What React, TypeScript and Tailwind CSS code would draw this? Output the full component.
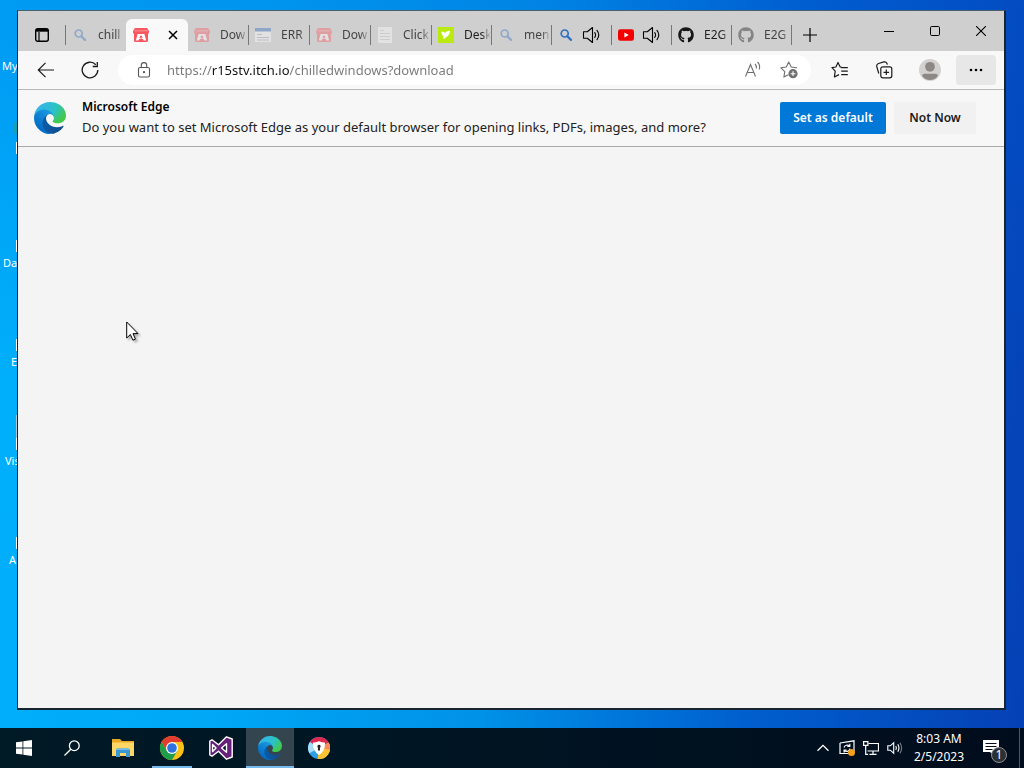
import React from "react";
import { FaGithub } from "react-icons/fa";

type TabKind = "search" | "itch" | "page" | "doc" | "leaf" | "youtube" | "github";

interface TabData {
  id: number;
  kind: TabKind;
  title?: string;
  audio?: boolean;
  active?: boolean;
  faded?: boolean;
  wide?: boolean;
}

const tabs: TabData[] = [
  { id: 1, kind: "search", title: "chill", faded: true },
  { id: 2, kind: "itch", active: true },
  { id: 3, kind: "itch", title: "Dow", faded: true, wide: true },
  { id: 4, kind: "page", title: "ERR", faded: true, wide: true },
  { id: 5, kind: "itch", title: "Dow", faded: true, wide: true },
  { id: 6, kind: "doc", title: "Click", faded: true, wide: true },
  { id: 7, kind: "leaf", title: "Desk" },
  { id: 8, kind: "search", title: "men", faded: true },
  { id: 9, kind: "search", audio: true },
  { id: 10, kind: "youtube", audio: true },
  { id: 11, kind: "github", title: "E2G" },
  { id: 12, kind: "github", title: "E2G", faded: true },
];

function EdgeLogo({ id, className }: { id: string; className: string }) {
  return (
    <svg viewBox="0 0 256 256" className={className} aria-hidden="true">
      <defs>
        <linearGradient id={id + "a"} x1="0.2" y1="0.5" x2="1" y2="0.5">
          <stop offset="0" stopColor="#0c59a4" />
          <stop offset="1" stopColor="#114a8b" />
        </linearGradient>
        <linearGradient id={id + "b"} x1="0.8" y1="0.1" x2="0.3" y2="0.95">
          <stop offset="0" stopColor="#1b9de2" />
          <stop offset="0.4" stopColor="#1186d6" />
          <stop offset="1" stopColor="#0067c0" />
        </linearGradient>
        <radialGradient id={id + "c"} cx="0.1" cy="0.2" r="1">
          <stop offset="0" stopColor="#35b4e8" />
          <stop offset="0.35" stopColor="#2fbbd9" />
          <stop offset="0.6" stopColor="#2bc3c2" />
          <stop offset="0.95" stopColor="#42c94f" />
        </radialGradient>
      </defs>
      <g transform="translate(-4.63 -4.92)">
        <path
          fill={"url(#" + id + "a)"}
          d="M235.68 195.46a93.73 93.73 0 0 1-10.54 4.71 101.87 101.87 0 0 1-35.9 6.46c-47.32 0-88.54-32.55-88.54-74.32A31.48 31.48 0 0 1 117.13 105c-42.8 1.8-53.8 46.4-53.8 72.53 0 73.88 68.09 81.37 82.76 81.37 7.91 0 19.84-2.3 27-4.56l1.31-.44a128.34 128.34 0 0 0 66.6-52.8 4 4 0 0 0-5.32-5.64Z"
        />
        <path
          fill={"url(#" + id + "b)"}
          d="M110.34 246.34A79.2 79.2 0 0 1 87.6 225a80.72 80.72 0 0 1 29.53-120c3.12-1.47 8.45-4.13 15.54-4a32.35 32.35 0 0 1 25.69 13 31.88 31.88 0 0 1 6.36 18.66c0-.21 24.46-79.6-80-79.6-43.9 0-80 41.66-80 78.21a130.15 130.15 0 0 0 12.11 56 128 128 0 0 0 156.38 67.11 75.55 75.55 0 0 1-62.78-8Z"
        />
        <path
          fill={"url(#" + id + "c)"}
          d="M156.94 153.78c-.81 1.05-3.3 2.5-3.3 5.66 0 2.61 1.7 5.12 4.72 7.23 14.38 10 41.49 8.68 41.56 8.68a59.56 59.56 0 0 0 30.27-8.35 61.38 61.38 0 0 0 30.43-52.88c.26-22.41-8-37.31-11.34-43.91C228.09 28.76 182.35 4.92 132.61 4.92a128 128 0 0 0-128 126.2c.48-36.54 36.8-66.05 80-66.05 3.5 0 23.46.34 42 10.07 16.34 8.58 24.9 18.94 30.85 29.21 6.18 10.67 7.28 24.15 7.28 29.52s-2.74 13.33-7.8 19.91Z"
        />
      </g>
    </svg>
  );
}

function SpeakerIcon({ className }: { className: string }) {
  return (
    <svg viewBox="0 0 18 18" className={className} fill="none" stroke="currentColor" strokeWidth="1.100" aria-hidden="true">
      <path d="M1.500 5.700h3.800L10.500 1.500v15l-5.200-4.200H1.500Z" strokeLinejoin="round" />
      <path d="M12.700 6.600a4 4 0 0 1 0 4.800M15 4.400a7.500 7.500 0 0 1 0 9.200" strokeLinecap="round" />
    </svg>
  );
}

function Favicon({ kind }: { kind: TabKind }) {
  switch (kind) {
    case "search":
      return (
        <svg viewBox="0 0 16 16" className="size-4" fill="none" stroke="#2f6fc2" aria-hidden="true">
          <circle cx="6.700" cy="6.500" r="3.500" strokeWidth="1.700" />
          <path d="m9.300 9.200 3.700 3.700" strokeWidth="2.200" strokeLinecap="round" />
        </svg>
      );
    case "itch":
      return (
        <svg viewBox="0 0 16 16" className="size-4" aria-hidden="true">
          <path fill="#f9565f" d="M2 1h12l2 3v1.600A2 2 0 0 1 15 7v6.500q0 1.500-1.500 1.500h-11Q1 15 1 13.500V7A2 2 0 0 1 0 5.600V4Z" />
          <path d="M1.300 3.800h13.400" stroke="#fba3a6" strokeWidth=".8" />
          <path fill="#fff" d="M4.600 7h6.800l1.800 6.500h-2.600l-.8-1.400H6.200l-.8 1.400H2.800Z" />
          <path fill="#f9565f" d="m8 8.200 2 2.200H8.700v1.400H7.300v-1.400H6Z" />
        </svg>
      );
    case "page":
      return (
        <svg viewBox="0 0 16 16" className="size-4" aria-hidden="true">
          <path fill="#fff" d="M0 1h16v14H0z" />
          <path fill="#2e6bc0" d="M0 1h16v3.500H0z" />
          <path stroke="#9da7b5" d="M2 7.500h5M2 10.500h12M2 13h12" />
        </svg>
      );
    case "doc":
      return (
        <svg viewBox="0 0 16 16" className="size-4" aria-hidden="true">
          <path fill="#fff" d="M1 0h14v16H1z" />
          <path stroke="#c8c8c8" d="M3 3.500h4M3 6.500h10M3 9.500h10M3 12.500h10" />
        </svg>
      );
    case "leaf":
      return (
        <svg viewBox="0 0 16 16" className="size-4" aria-hidden="true">
          <path fill="#b9ea12" d="M0 0h16v16H0z" />
          <path fill="#fff" d="M3.500 4.800q2.300-.6 3.500 1.200Q9 3.500 12 3.800q-.3 4.400-3.200 5.900Q7 10.700 5.600 12.200 5.800 9.500 4.300 8 3.300 6.800 3.500 4.800Z" />
        </svg>
      );
    case "youtube":
      return (
        <svg viewBox="0 0 16 16" className="size-4" aria-hidden="true">
          <rect y="2.300" width="16" height="11.400" rx="2.300" fill="#f40000" />
          <path fill="#fff" d="m6.400 5.500 4.300 2.500-4.300 2.500Z" />
        </svg>
      );
    case "github":
      return <FaGithub className="size-4 text-[#161616]" aria-hidden="true" />;
  }
}

function Tab({ tab }: { tab: TabData }) {
  if (tab.active) {
    return (
      <div className="mt-2 flex w-[62px] shrink-0 items-center justify-between self-stretch rounded-t-md bg-[#f9f9f9] pr-2.5 pl-[7px]">
        <Favicon kind={tab.kind} />
        <button aria-label="Close tab" className="text-black">
          <svg viewBox="0 0 10 10" className="size-2.5" stroke="currentColor" strokeWidth="1.500" aria-hidden="true">
            <path d="m1 1 8 8M9 1 1 9" />
          </svg>
        </button>
      </div>
    );
  }
  const beforeActive = tab.id === 1;
  return (
    <button
      aria-label={tab.title ? undefined : "Playing audio"}
      className={"mt-2 flex h-8 shrink-0 items-center pl-1.5 " + (tab.wide ? "w-[61px] " : "w-[60px] ")}
    >
      <span className={tab.faded ? "shrink-0 opacity-40" : "shrink-0"}>
        <Favicon kind={tab.kind} />
      </span>
      {tab.audio ? (
        <SpeakerIcon className="ml-2 size-[18px] shrink-0" />
      ) : (
        <span
          className={
            "ml-2.5 min-w-0 flex-1 overflow-hidden text-left text-xs leading-5 whitespace-nowrap [mask-image:linear-gradient(90deg,#000_65%,transparent)] " +
            (tab.faded ? "text-[#444]" : "text-[#222]")
          }
        >
          {tab.title}
        </span>
      )}
      <span className={beforeActive ? "ml-auto h-5 w-px shrink-0" : "ml-auto h-5 w-px shrink-0 bg-[#777]"} />
    </button>
  );
}

function TitleBar() {
  return (
    <div className="flex h-10 shrink-0 items-stretch bg-[#cfcfcf] text-black">
      <button aria-label="Tab actions" className="mt-2 flex w-[47px] shrink-0 items-center justify-center">
        <svg viewBox="0 0 16 16" className="size-4" fill="none" stroke="currentColor" aria-hidden="true">
          <rect x="1.700" y="1.700" width="12.600" height="12.600" rx="2" strokeWidth="1.400" />
          <path d="M2 3.300h12" strokeWidth="2.800" />
          <path d="M5 5v9" strokeWidth="1.200" />
        </svg>
      </button>
      <span className="mt-[14px] h-5 w-px shrink-0 bg-[#777]" />
      <div className="flex min-w-0">
        {tabs.map((t) => (
          <Tab key={t.id} tab={t} />
        ))}
      </div>
      <button aria-label="New tab" className="mt-2 flex w-9 shrink-0 items-center justify-center">
        <svg viewBox="0 0 14 14" className="size-3.5" stroke="currentColor" strokeWidth="1.200" aria-hidden="true">
          <path d="M7 0v14M0 7h14" />
        </svg>
      </button>
      <div className="ml-auto flex shrink-0">
        <button aria-label="Minimize" className="flex w-[46px] items-center justify-center">
          <svg viewBox="0 0 10 10" className="size-2.5" stroke="currentColor" aria-hidden="true">
            <path d="M0 5.500h10" />
          </svg>
        </button>
        <button aria-label="Maximize" className="flex w-[46px] items-center justify-center">
          <svg viewBox="0 0 10 10" className="size-2.5" fill="none" stroke="currentColor" aria-hidden="true">
            <rect x=".5" y=".5" width="9" height="9" rx="1.200" />
          </svg>
        </button>
        <button aria-label="Close" className="flex w-[46px] items-center justify-center">
          <svg viewBox="0 0 10 10" className="size-2.5" stroke="currentColor" strokeWidth="1.100" aria-hidden="true">
            <path d="m0 0 10 10M10 0 0 10" />
          </svg>
        </button>
      </div>
    </div>
  );
}

function Toolbar() {
  return (
    <div className="flex h-[39px] shrink-0 items-center border-b border-[#b9b9b9] bg-[#f8f8f8] pr-2 pl-1.5 text-[#1b1b1b]">
      <button aria-label="Back" className="flex h-8 w-11 items-center justify-center">
        <svg viewBox="0 0 18 18" className="size-[18px]" fill="none" stroke="currentColor" strokeWidth="1.200" aria-hidden="true">
          <path d="M17 9H1.500M8.500 1.800 1.300 9l7.200 7.200" />
        </svg>
      </button>
      <button aria-label="Refresh" className="flex h-8 w-11 items-center justify-center">
        <svg viewBox="0 0 18 18" className="size-[18px]" fill="none" stroke="currentColor" strokeWidth="1.300" aria-hidden="true">
          <path d="M16.800 9A7.800 7.800 0 1 1 14.800 3.800" />
          <path d="M16.300 1v4.500h-4.600" />
        </svg>
      </button>
      <div className="ml-1.5 flex h-[30px] min-w-0 flex-1 items-center rounded-full bg-white pr-1 pl-[18px] text-[#6f6f6f]">
        <button aria-label="Site information" className="shrink-0 text-[#555]">
          <svg viewBox="0 0 16 16" className="size-4" fill="none" stroke="currentColor" strokeWidth="1.100" aria-hidden="true">
            <rect x="2.500" y="5.500" width="11" height="9.500" rx="1.500" />
            <path d="M5.300 5.500V3.300a2.700 2.700 0 0 1 5.400 0v2.200" />
            <circle cx="8" cy="10.200" r=".6" fill="currentColor" />
          </svg>
        </button>
        <input
          type="text"
          aria-label="Address"
          defaultValue="https://r15stv.itch.io/chilledwindows?download"
          className="ml-[15px] min-w-0 flex-1 bg-[linear-gradient(90deg,#777_45px,#111_45px,#111_122px,#777_122px)] bg-clip-text text-[13px] leading-5 text-transparent outline-none"
        />
        <button aria-label="Read aloud" className="flex w-9 shrink-0 justify-center">
          <svg viewBox="0 0 18 18" className="size-[18px]" fill="none" stroke="currentColor" strokeWidth="1.100" aria-hidden="true">
            <path d="M1.500 15.500 6.500 3.500l5 12M3.300 11.500h6.500" />
            <path d="M11 3q2 1.800 1.200 4.500M13.500 1q3.200 3 1.700 7.500" />
          </svg>
        </button>
        <button aria-label="Add to favorites" className="flex w-9 shrink-0 justify-center">
          <svg viewBox="0 0 18 18" className="size-[18px]" fill="none" stroke="currentColor" strokeWidth="1.100" aria-hidden="true">
            <path d="m16.200 7.300.3-.5-5.300-.8L8.700 1 6.300 6 .9 6.800l3.900 3.900-.9 5.400 4.400-2.300" strokeLinejoin="round" />
            <circle cx="13" cy="12.700" r="4.600" fill="currentColor" stroke="none" />
            <path d="M13 10.300v4.800M10.600 12.700h4.800" stroke="#fff" />
          </svg>
        </button>
      </div>
      <button aria-label="Favorites" className="ml-[7px] flex h-8 w-11 items-center justify-center">
        <svg viewBox="0 0 18 18" className="size-[18px]" fill="none" stroke="currentColor" strokeWidth="1.200" strokeLinejoin="round" aria-hidden="true">
          <path d="M10.500 6.200 9.200 6 7 1.500 4.900 6 1 6.600l3.200 3.600-.8 5.800L8 13.600M10.200 6.600h6.600M10.200 10.100h6.600M10.200 13.600h6.600" />
        </svg>
      </button>
      <button aria-label="Collections" className="flex h-8 w-11 items-center justify-center">
        <svg viewBox="0 0 18 18" className="size-[18px]" fill="none" stroke="currentColor" strokeWidth="1.200" strokeLinejoin="round" aria-hidden="true">
          <rect x="5.800" y="5.800" width="11" height="11" rx="2" />
          <path d="M11.300 8.500v5.600M8.500 11.300h5.600" />
          <path d="M3.800 12.500 2 6.500Q1 3.300 3.600 2.500l5.200-1.600q2.300-.5 3.200 1.500l.4 1.200" />
        </svg>
      </button>
      <button aria-label="Profile" className="flex h-8 w-12 items-center justify-center">
        <svg viewBox="0 0 24 24" className="size-[22px]" aria-hidden="true">
          <circle cx="12" cy="12" r="12" fill="#d3d1cf" />
          <circle cx="12" cy="8.500" r="5.300" fill="#8c8885" />
          <path fill="#8c8885" d="M3.500 18.600q0-2.600 2.800-2.600h11.400q2.800 0 2.800 2.600-3 4.300-8.500 4.300t-8.500-4.300Z" />
        </svg>
      </button>
      <button aria-label="Settings and more" className="ml-0.5 flex h-[30px] w-10 items-center justify-center rounded-sm bg-[#e7e7e7]">
        <svg viewBox="0 0 14 4" className="h-1 w-3.5" fill="#000" aria-hidden="true">
          <circle cx="2" cy="2" r="1.300" />
          <circle cx="7" cy="2" r="1.300" />
          <circle cx="12" cy="2" r="1.300" />
        </svg>
      </button>
    </div>
  );
}

function DefaultBrowserBar() {
  return (
    <div className="flex h-[57px] shrink-0 items-center border-b border-[#a9a9a9] bg-[#f7f7f7] pr-7 pl-4">
      <EdgeLogo id="bar" className="size-8 shrink-0" />
      <div className="ml-4 min-w-0 flex-1 pb-0.5 text-[13px] leading-5 text-[#222]">
        <h1 className="text-xs leading-5 font-semibold text-black">Microsoft Edge</h1>
        <p className="whitespace-nowrap">
          Do you want to set Microsoft Edge as your default browser for opening links, PDFs, images, and more?
        </p>
      </div>
      <button className="h-8 w-[106px] shrink-0 rounded-xs bg-[#0078d7] text-xs font-semibold text-white">Set as default</button>
      <button className="ml-2 h-8 w-[82px] shrink-0 rounded-xs bg-[#f1f1f1] text-xs font-semibold text-[#1b1b1b]">Not Now</button>
    </div>
  );
}

function ChromeLogo() {
  return (
    <svg viewBox="0 0 24 24" className="size-6" aria-hidden="true">
      <circle cx="12" cy="12" r="12" fill="#fbc116" />
      <path fill="#e33b2e" d="M1.600 6A12 12 0 0 1 22.400 6H12L6.800 15Z" />
      <path fill="#1e9e4a" d="M1.600 6A12 12 0 0 0 12 24l5.200-9H6.800Z" />
      <circle cx="12" cy="12" r="6" fill="#fff" />
      <circle cx="12" cy="12" r="4.800" fill="#2f73e0" />
    </svg>
  );
}

function Taskbar() {
  return (
    <div className="flex h-10 shrink-0 items-stretch bg-[linear-gradient(90deg,#001a26,#001422_50%,#000c1c)] text-white">
      <div className="flex">
        <button aria-label="Start" className="flex w-12 items-center justify-center">
          <svg viewBox="0 0 16 16" className="size-4" fill="currentColor" aria-hidden="true">
            <path d="M0 2.300 6.500 1.400v6.200H0ZM7.300 1.300 16 0v7.600H7.300ZM0 8.400h6.500v6.200L0 13.700ZM7.300 8.400H16V16l-8.700-1.300Z" />
          </svg>
        </button>
        <button aria-label="Search" className="flex w-12 items-center justify-center">
          <svg viewBox="0 0 16 16" className="size-4" fill="none" stroke="currentColor" strokeWidth="1.300" aria-hidden="true">
            <circle cx="10.300" cy="5.700" r="4.900" />
            <path d="M6.800 9.200.5 15.500" />
          </svg>
        </button>
      </div>
      <div className="ml-[3px] flex gap-px">
        <button aria-label="File Explorer" className="flex w-12 items-center justify-center">
          <svg viewBox="0 0 22 18" className="h-[18px] w-[22px]" aria-hidden="true">
            <path fill="#e8a925" d="M0 0h8l2 2h12v4H0Z" />
            <path fill="#ffd766" d="M0 3.500h22V17H0Z" />
            <path fill="#3b97d3" d="M4 18v-7q0-1.500 1.500-1.500h11Q18 9.500 18 11v7h-4v-4H8v4Z" />
            <path fill="#6fbde8" d="M4 11q0-1.500 1.500-1.500h11Q18 9.500 18 11Z" />
          </svg>
        </button>
        <button aria-label="Chrome" className="flex w-12 flex-col items-center">
          <span className="flex h-[38px] items-center pt-0.5"><ChromeLogo /></span>
          <span className="h-0.5 w-10 bg-[#76b9ed]" />
        </button>
        <button aria-label="Visual Studio" className="flex w-12 items-center justify-center">
          <svg viewBox="0 0 24 24" className="size-6" aria-hidden="true">
            <path
              fill="#68217a"
              stroke="#fff"
              strokeWidth="1.400"
              strokeLinejoin="round"
              fillRule="evenodd"
              d="M17.500.8 23.200 3v18l-5.700 2.200-8-8L3 20.200.8 19V5L3 3.800l6.500 5ZM3.600 8.500v7L7 12ZM17.500 7.800 12.600 12l4.900 4.200Z"
            />
          </svg>
        </button>
        <button aria-label="Edge" className="flex w-12 flex-col items-center bg-[#35454f]">
          <span className="flex h-[38px] items-center pt-0.5"><EdgeLogo id="task" className="size-6" /></span>
          <span className="h-0.5 w-full bg-[#76b9ed]" />
        </button>
        <button aria-label="Secure browser" className="flex w-12 items-center justify-center">
          <svg viewBox="0 0 24 24" className="size-[22px]" aria-hidden="true">
            <circle cx="12" cy="12" r="12" fill="#2d9fe6" />
            <path fill="#e0284f" d="M2 5.500A12 12 0 0 1 22.500 6L12 12Z" />
            <path fill="#ffc233" d="M22.500 6A12 12 0 0 1 10.500 24L12 12Z" />
            <path fill="#f58a5a" d="M22.500 6a12 12 0 0 1 1.300 8L12 12Z" />
            <path fill="#a8dcf7" d="M2 5.500A12 12 0 0 0 1.500 17.700L12 12Z" />
            <path fill="#fff" d="M12 4.500q3.500 1.500 6.500 1.500.5 9.500-6.500 13.500Q5 15.500 5.500 6 8.500 6 12 4.500Z" />
            <path fill="#222" d="M12 8.500a1.800 1.800 0 0 1 1 3.300l.2 2.900h-2.400l.2-2.900a1.800 1.800 0 0 1 1-3.300Z" />
          </svg>
        </button>
      </div>
      <div className="ml-auto flex items-stretch">
        <button aria-label="Show hidden icons" className="flex w-6 items-center justify-center">
          <svg viewBox="0 0 12 8" className="h-2 w-3" fill="none" stroke="currentColor" strokeWidth="1.300" aria-hidden="true">
            <path d="m.5 6.800 5.500-5.500 5.500 5.500" />
          </svg>
        </button>
        <button aria-label="Updates" className="flex w-6 items-center justify-center">
          <svg viewBox="0 0 16 16" className="size-4" fill="none" stroke="currentColor" strokeWidth="1.200" aria-hidden="true">
            <path d="M1 3 15 .8v11M1 3v10.500h9" />
            <path d="M5 7.500a3.200 3.200 0 0 1 5.500-1.200M10.800 3.800v2.700H8.300M11 8.700a3.200 3.200 0 0 1-5.500 1.600M5.100 12.500V10h2.500" />
            <circle cx="12.500" cy="12.500" r="3.500" fill="#f5a11d" stroke="none" />
          </svg>
        </button>
        <button aria-label="Network" className="flex w-6 items-center justify-center">
          <svg viewBox="0 0 16 16" className="size-4" fill="none" stroke="currentColor" strokeWidth="1.200" aria-hidden="true">
            <path d="M5.500 3.500h10v7.500h-11M10 11v3.200M6.500 14.400h7" />
            <path d="M.6 1.600h4.300v3.800H.6ZM2.700 5.400v8.900h2.500" />
          </svg>
        </button>
        <button aria-label="Volume" className="flex w-6 items-center justify-center">
          <svg viewBox="0 0 16 16" className="size-4" fill="none" stroke="currentColor" strokeWidth="1.100" aria-hidden="true">
            <path d="M.8 5.800h2.500l3.400-3v10.400l-3.400-3H.8Z" />
            <path d="M8.800 6q1.200 2 0 4M10.800 4.300q2.300 3.700 0 7.400" />
            <path d="M12.900 2.700q3.400 5.300 0 10.600" stroke="#78838e" />
          </svg>
        </button>
        <button className="flex w-16 flex-col items-center justify-center text-xs leading-[18px] whitespace-nowrap">
          <span>8:03 AM</span>
          <span>2/5/2023</span>
        </button>
        <button aria-label="Notifications" className="relative flex w-12 justify-center pt-3 pr-2">
          <svg viewBox="0 0 16 16" className="size-4" aria-hidden="true">
            <path fill="#fff" d="M0 0h16v12h-5v4l-4-4H0Z" />
            <path stroke="#000d1d" d="M2.500 3.500h11M2.500 6.500h11M2.500 9.500h7" />
          </svg>
          <span className="absolute top-[19px] left-5 flex size-4 items-center justify-center rounded-full border border-[#8b8f93] bg-[#2b3036] text-xs leading-none">1</span>
        </button>
        <span className="mr-1 w-px bg-[#4c5560]" />
      </div>
    </div>
  );
}

export default function App() {
  return (
    <div className="flex h-screen flex-col overflow-hidden bg-[linear-gradient(180deg,rgba(0,90,215,0.25),transparent_50%),linear-gradient(95deg,#00b0fc,#00a8f6_25%,#0091e8_50%,#005fce_74%,#0540b5_100%)] font-['Noto_Sans','Open_Sans',sans-serif]">
      <div className="relative flex min-h-0 flex-1 flex-col pt-2.5 pr-[18px] pb-[18px] pl-[17px]">
        <div className="absolute inset-y-0 left-0 w-[17px] overflow-hidden text-[11px] leading-4 text-white">
          <span className="absolute top-[58px] left-0.5">My</span>
          <span className="absolute top-[122px] -right-1 h-3 w-2 rounded-full bg-[#2c9c8c] opacity-60" />
          <span className="absolute top-[142px] right-0 h-3 w-px bg-white" />
          <span className="absolute top-[240px] right-0 h-3 w-px bg-white" />
          <span className="absolute top-[255px] left-[3px]">Da</span>
          <span className="absolute top-[339px] right-0 h-3 w-px bg-white" />
          <span className="absolute top-[354px] left-[11px]">E</span>
          <span className="absolute top-[415px] right-0 h-6 w-px bg-[#a9c9d8]" />
          <span className="absolute top-[438px] right-0 h-3 w-px bg-white" />
          <span className="absolute top-[453px] left-[5px]">Vis</span>
          <span className="absolute top-[537px] right-0 h-3 w-px bg-white" />
          <span className="absolute top-[552px] left-[9px]">A</span>
        </div>
        <main className="relative flex min-h-0 flex-1 flex-col border border-r-2 border-b-2 border-[#182430] border-t-[#49606f] bg-[#f4f4f4]">
          <TitleBar />
          <Toolbar />
          <DefaultBrowserBar />
          <div className="relative flex-1">
            <svg viewBox="0 0 14 21" className="absolute top-[174px] left-[108px] h-[21px] w-3.5 drop-shadow-[2px_2px_1px_rgba(0,0,0,0.3)]" aria-hidden="true">
              <path fill="#fff" stroke="#000" d="M.7 1v16l3.700-3.500 2.500 5.700 2.500-1.100-2.400-5.500h5Z" />
            </svg>
          </div>
        </main>
      </div>
      <Taskbar />
    </div>
  );
}
